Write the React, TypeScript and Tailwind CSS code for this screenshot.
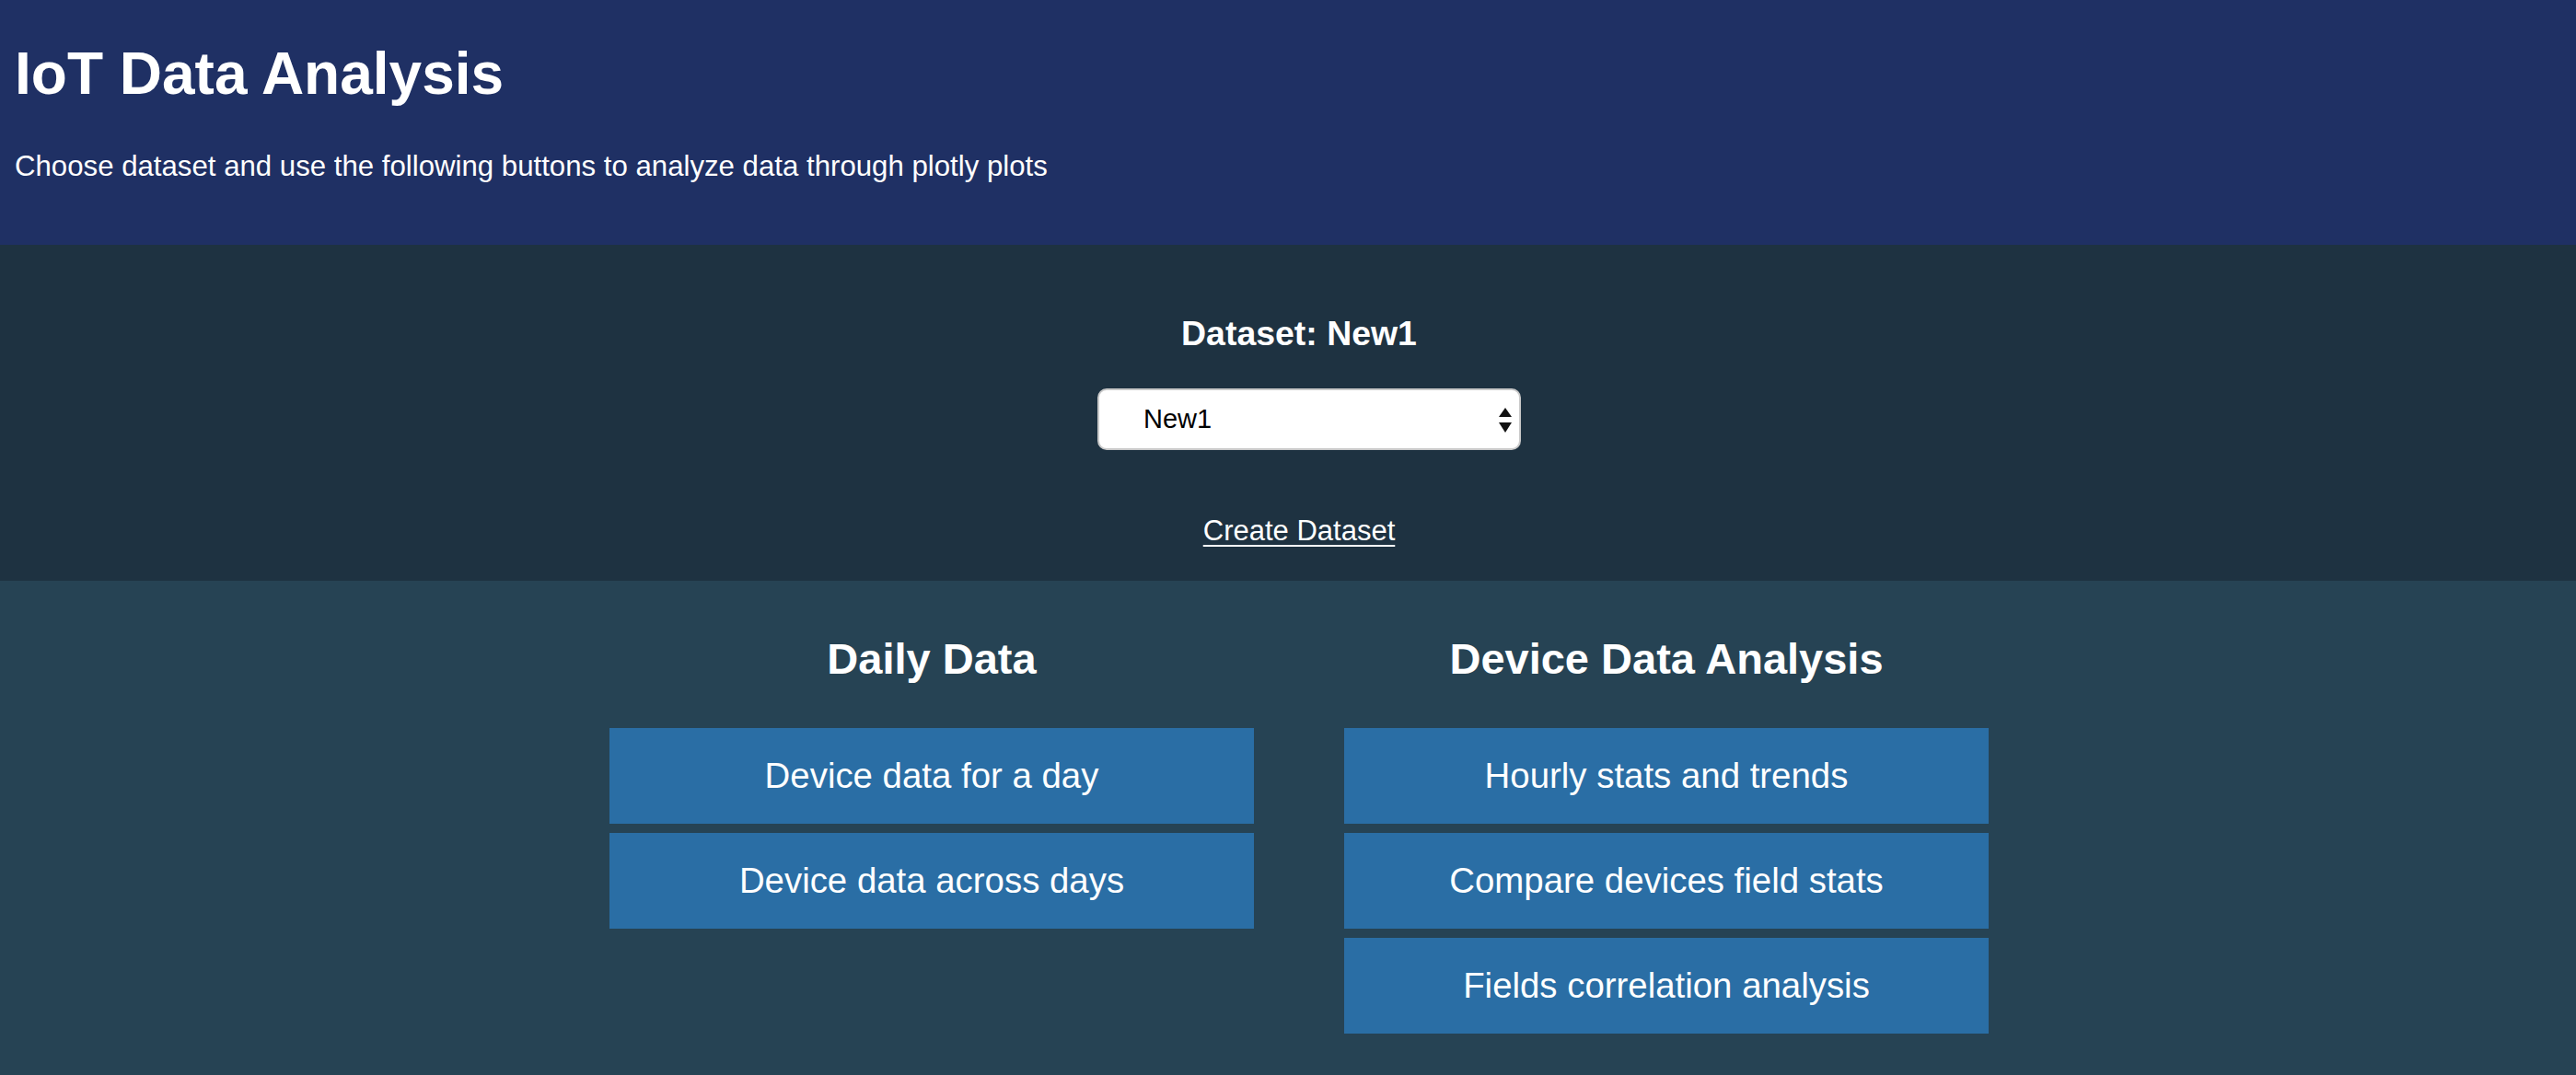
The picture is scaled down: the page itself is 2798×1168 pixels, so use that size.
import { useState } from "react";

const font = { fontFamily: '"Liberation Sans", Arial, Helvetica, sans-serif' };

const daily = ["Device data for a day", "Device data across days"];
const device = ["Hourly stats and trends", "Compare devices field stats", "Fields correlation analysis"];

function ActionButton({ label }: { label: string }) {
  return (
    <button className="w-full h-[104px] bg-[#2a6ea5] text-white text-[38.4px] leading-[38.4px] cursor-pointer">
      {label}
    </button>
  );
}

function Column({ title, items }: { title: string; items: string[] }) {
  return (
    <div className="w-[700px] flex flex-col items-center">
      <h2 className="text-[47px] leading-[48px] font-bold text-white">{title}</h2>
      <div className="mt-[51px] w-full flex flex-col gap-[10px]">
        {items.map((item) => (
          <ActionButton key={item} label={item} />
        ))}
      </div>
    </div>
  );
}

export default function App() {
  const [dataset, setDataset] = useState("New1");

  return (
    <div className="min-h-[1168px] w-full flex flex-col bg-[#264354]" style={font}>
      <header className="bg-[#1f3064] text-white pl-[16px] pt-[48px] pb-[69px]">
        <h1 className="text-[64px] leading-[64px] font-bold">IoT Data Analysis</h1>
        <p className="mt-[53px] text-[31.2px] leading-[32px]">
          Choose dataset and use the following buttons to analyze data through plotly plots
        </p>
      </header>

      <section className="bg-[#1e3241] pt-[78px] pb-[39px] pl-[24px] flex flex-col items-center text-white">
        <h3 className="text-[37.44px] leading-[37.44px] font-bold">Dataset: {dataset}</h3>
        <div className="relative mt-[41px] ml-[22px] w-[460px] h-[67px]">
          <select
            value={dataset}
            onChange={(e) => setDataset(e.target.value)}
            className="appearance-none w-full h-full bg-white text-black text-[29px] pl-[48px] rounded-[10px] border-2 border-[#c9c9c9] outline-none"
            style={font}
          >
            <option value="New1">New1</option>
            <option value="New2">New2</option>
          </select>
          <svg
            className="absolute right-[10px] top-[21px] pointer-events-none"
            width="14"
            height="27"
            viewBox="0 0 14 27"
          >
            <path d="M7 0 L14 10 L0 10 Z" fill="#111" />
            <path d="M0 16 L14 16 L7 27 Z" fill="#111" />
          </svg>
        </div>
        <a href="#" className="mt-[72px] text-[31px] leading-[31px] underline underline-offset-[5px] decoration-2 text-white">
          Create Dataset
        </a>
      </section>

      <main className="flex-1 pt-[61px] pb-[46px] pl-[24px] flex justify-center gap-[98px]">
        <Column title="Daily Data" items={daily} />
        <Column title="Device Data Analysis" items={device} />
      </main>
    </div>
  );
}
